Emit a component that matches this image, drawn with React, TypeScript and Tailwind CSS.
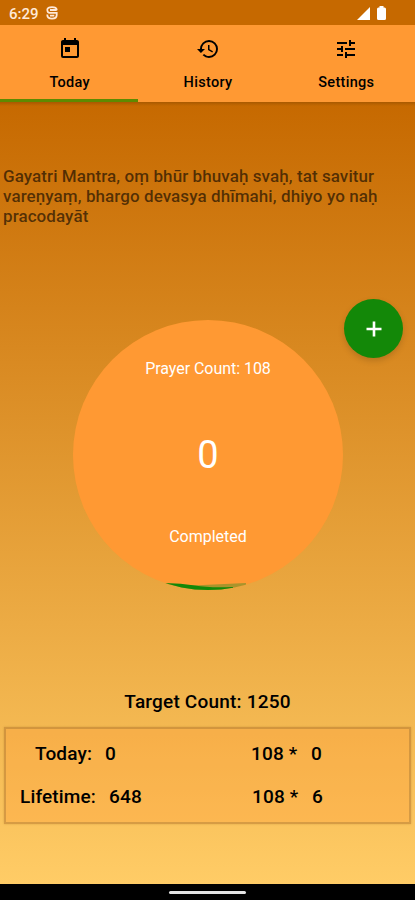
import type { ReactNode } from 'react'
import { MdHistory, MdToday, MdTune } from 'react-icons/md'

const MANTRA = [
  'Gayatri Mantra, oṃ bhūr bhuvaḥ svaḥ, tat savitur',
  'vareṇyaṃ, bhargo devasya dhīmahi, dhiyo yo naḥ',
  'pracodayāt',
]

export default function App() {
  return (
    <div className="flex h-[900px] w-[415px] flex-col overflow-hidden bg-black font-['Roboto','Noto_Sans',sans-serif]">
      <StatusBar />

      <nav className="flex h-[77px] shrink-0 bg-[#ff9933]">
        <Tab label="Today" icon={<MdToday size={24} />} active />
        <Tab label="History" icon={<MdHistory size={24} />} />
        <Tab label="Settings" icon={<MdTune size={24} />} />
      </nav>

      <main className="relative flex h-[782px] shrink-0 flex-col bg-linear-to-b/srgb from-[#c66900] to-[#ffcc66]">
        <div className="pointer-events-none absolute inset-x-0 top-0 h-1 bg-linear-to-b from-black/15 to-transparent" />

        <p className="mt-[63.5px] ml-[3px] h-[60px] text-[17px] leading-5 font-medium tracking-[0.08px] whitespace-nowrap text-black/60">
          {MANTRA.map((line) => (
            <span key={line} className="block">{line}</span>
          ))}
        </p>

        {/* add button floats over the page */}
        <button className="absolute top-[197px] right-[12px] flex size-[59px] items-center justify-center rounded-full bg-[#138808] text-white shadow-[0_3px_6px_rgba(0,0,0,0.15)]">
          <svg width="16" height="16" viewBox="0 0 16 16" fill="none" stroke="currentColor" strokeWidth="2.6">
            <path d="M8 0.5V15.5M0.5 8H15.5" />
          </svg>
        </button>

        <Counter prayerCount={108} completed={0} />

        <div className="mt-[99px] text-center text-[19px] leading-[26px] font-medium tracking-[0.2px]">
          Target Count: 1250
        </div>

        <section className="mx-1 mt-3 flex h-[97px] flex-col border-2 border-black/15 bg-[#ff9933]/30 pt-1 text-[19px] font-medium tracking-[0.15px] shadow-[0_0_2px_rgba(120,80,0,0.25)]">
          <div className="flex h-[43px] items-center">
            <span className="ml-[29px] w-[70px]">Today:</span>
            <span className="w-[146px]">0</span>
            <span className="w-[60px]">108 *</span>
            <span>0</span>
          </div>
          <div className="flex h-[43px] items-center">
            <span className="ml-[14px] w-[89px]">Lifetime:</span>
            <span className="w-[143px]">648</span>
            <span className="w-[60px]">108 *</span>
            <span>6</span>
          </div>
        </section>
      </main>

      <footer className="flex flex-1 items-center justify-center">
        <div className="h-[3px] w-[77px] rounded-full bg-[#e4e4e4]" />
      </footer>
    </div>
  )
}

function StatusBar() {
  return (
    <header className="flex h-[25px] shrink-0 items-center bg-[#c66900] pt-[3px] pr-[28px] pl-[9px] text-[#ffe9d8]">
      <span className="text-[15px] leading-5 font-medium">6:29</span>
      <svg className="mb-[2px] ml-[7px]" width="12" height="14" viewBox="0 0 12 14" fill="none" stroke="currentColor" strokeWidth="1.8">
        <path d="M10.7 4.2V3.8Q10.7 1.2 6 1.2T1.3 3.8Q1.3 6.8 3.8 6.8H10.7V9Q10.7 12.7 6 12.7T1.3 9V8.4" />
        <path d="M4 4H10.7M4 9.6H8.3" />
      </svg>
      <svg className="mb-[2px] ml-auto text-white" width="30" height="15" viewBox="0 0 30 15" fill="currentColor">
        <path d="M0 14L13 1V14Z" />
        <path d="M22.5 0h4v1.5h1q1.5 0 1.5 1.5v9.5q0 1.5-1.5 1.5h-6q-1.5 0-1.5-1.5V3q0-1.5 1.5-1.5h1Z" />
      </svg>
    </header>
  )
}

interface TabProps {
  label: string
  icon: ReactNode
  active?: boolean
}

function Tab({ label, icon, active }: TabProps) {
  return (
    <button
      className={`flex flex-1 flex-col items-center border-b-[3px] pt-3 pl-px text-black ${
        active ? 'border-[#5f8a00]' : 'border-transparent'
      }`}
    >
      {icon}
      <span className="mt-3 text-[14.5px] leading-5 font-medium tracking-[0.3px]">{label}</span>
    </button>
  )
}

interface CounterProps {
  prayerCount: number
  completed: number
}

function Counter({ prayerCount, completed }: CounterProps) {
  return (
    <div className="relative mt-[94.5px] ml-[73px] flex size-[270px] shrink-0 flex-col items-center overflow-hidden rounded-full bg-[#ff9933] text-white">
      <span className="mt-[39px] text-[16px] leading-5 tracking-[-0.05px]">Prayer Count: {prayerCount}</span>
      <span className="mt-[52px] text-[38px] leading-[48px]">{completed}</span>
      <span className="mt-[48px] text-[16px] leading-5">Completed</span>

      {/* progress waves at the bottom of the circle */}
      <svg className="absolute bottom-0 left-0" width="270" height="10" viewBox="0 0 270 10">
        <path d="M92 4Q108 6 130 5T173 3V10H92Z" fill="#a9942c" />
        <path d="M92 3Q108 3 122 5.5T160 7V10H85V3Z" fill="#138808" />
      </svg>
    </div>
  )
}
